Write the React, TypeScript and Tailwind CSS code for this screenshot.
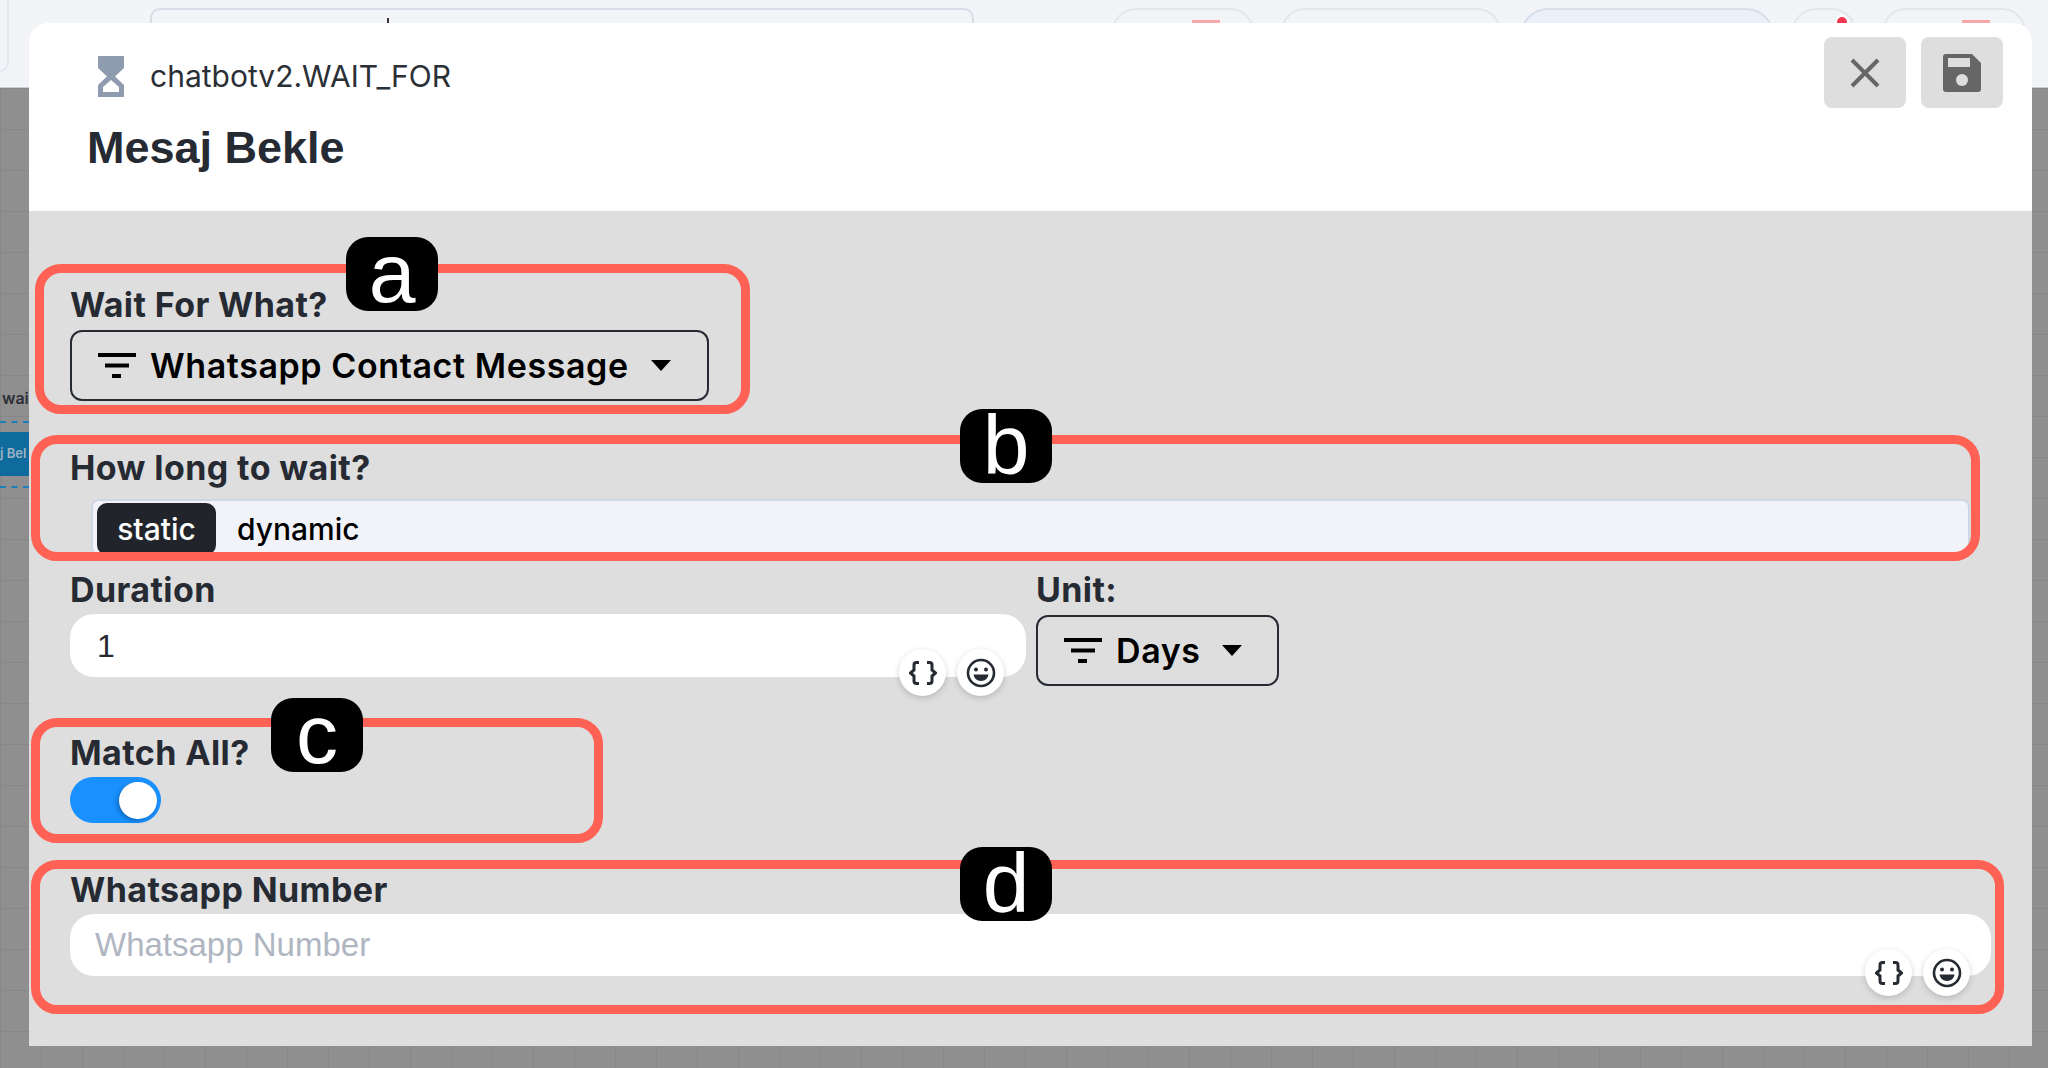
const sans = "[font-family:Inter,sans-serif]";
const helv = "[font-family:Liberation_Sans,sans-serif]";

function FilterIcon() {
  return (
    <svg width="38" height="26" viewBox="0 0 38 26" fill="#000">
      <rect x="0" y="0" width="38" height="4" />
      <rect x="7" y="10.5" width="24" height="4" />
      <rect x="14" y="21" width="9" height="4" />
    </svg>
  );
}

function Caret() {
  return (
    <svg width="20" height="11" viewBox="0 0 20 11" fill="#000">
      <path d="M0 0h20L10 11z" />
    </svg>
  );
}

function Select({ label, className }: { label: string; className: string }) {
  return (
    <div className={`flex items-center rounded-[12px] border-2 border-[#262a33] ${className}`}>
      <FilterIcon />
      <span className={`${sans} ml-[14px] text-[34px] font-semibold leading-none tracking-[0.6px] text-black`}>{label}</span>
      <span className="ml-auto flex">
        <Caret />
      </span>
    </div>
  );
}

function RoundButton({ children }: { children: React.ReactNode }) {
  return (
    <button className="flex h-[47px] w-[47px] items-center justify-center rounded-full bg-white shadow-[0_2px_6px_rgba(0,0,0,0.18)]">
      {children}
    </button>
  );
}

function InputTools({ className }: { className: string }) {
  return (
    <div className={`absolute flex gap-[11px] ${className}`}>
      <RoundButton>
        <svg width="28" height="24" viewBox="0 0 28 24" fill="none" stroke="#262a33" strokeWidth="3">
          <path d="M10 1.500H7.500Q5 1.500 5 4v5L1.500 12 5 15v5q0 2.500 2.500 2.500H10" />
          <path d="M18 1.500h2.500Q23 1.500 23 4v5l3.500 3L23 15v5q0 2.500-2.500 2.500H18" />
        </svg>
      </RoundButton>
      <RoundButton>
        <svg width="30" height="30" viewBox="0 0 30 30">
          <circle cx="15" cy="15" r="13" fill="none" stroke="#262a33" strokeWidth="2.600" />
          <circle cx="10" cy="11.500" r="2" fill="#262a33" />
          <circle cx="20" cy="11.500" r="2" fill="#262a33" />
          <path d="M7.500 16.500h15q-1 6.500-7.500 6.500t-7.500-6.500z" fill="#262a33" />
        </svg>
      </RoundButton>
    </div>
  );
}

function Label({ children }: { children: React.ReactNode }) {
  return (
    <div className={`${sans} flex h-[40px] items-center whitespace-nowrap text-[34px] font-bold leading-none tracking-[0.4px] text-[#262a33]`}>
      {children}
    </div>
  );
}

function Annotation({ letter, boxClass, badgeClass }: { letter: string; boxClass: string; badgeClass: string }) {
  return (
    <>
      <div className={`pointer-events-none absolute rounded-[26px] border-[9px] border-[#ff6154] ${boxClass}`} />
      <div
        className={`${helv} absolute flex h-[74px] w-[92px] items-center justify-center rounded-[22px] bg-black text-[84px] leading-none text-white ${badgeClass}`}
      >
        <span className="-mt-[3px]">{letter}</span>
      </div>
    </>
  );
}

function Backdrop() {
  return (
    <div className="absolute inset-0 flex flex-col">
      <div className="flex h-[88px] shrink-0 items-start border-b border-[#c8ced6] bg-[#f2f4f8] pt-[8px]">
        <div className="-mt-[8px] h-[72px] w-[9px] rounded-br-[12px] border-r-2 border-b-2 border-[#e3e6ec]" />
        <div className="ml-[141px] h-[60px] w-[824px] rounded-t-[10px] border-2 border-[#d8dde5]" />
        <div className="ml-[138px] h-[60px] w-[142px] rounded-t-[24px] border-2 border-[#e3e6ec]" />
        <div className="ml-[27px] h-[60px] w-[220px] rounded-t-[24px] border-2 border-[#e3e6ec]" />
        <div className="ml-[19px] h-[60px] w-[254px] rounded-t-[28px] border-2 border-[#d8dfe8] bg-[#e9f0f8]" />
        <div className="ml-[18px] h-[60px] w-[64px] rounded-t-[24px] border-2 border-[#e3e6ec]" />
        <div className="ml-[26px] h-[60px] w-[144px] rounded-t-[24px] border-2 border-[#e3e6ec]" />
      </div>
      <div className="relative flex-1 bg-[#8f8f8f] bg-[linear-gradient(#878787_1px,transparent_1px),linear-gradient(90deg,#878787_1px,transparent_1px)] bg-[size:41px_41px]">
        <span className={`${sans} absolute left-[2px] top-[298px] text-[16px] font-semibold leading-[24px] text-[#2d3036]`}>wai</span>
        <div className="absolute left-0 top-[333px] h-0 w-[29px] border-t-2 border-dashed border-[#1d7fb8]" />
        <div className={`${sans} absolute left-0 top-[344px] flex h-[44px] w-[29px] items-center overflow-hidden whitespace-nowrap bg-[#0f6a9e] text-[13px] font-semibold text-[#9fb4c2]`}>j Bel</div>
        <div className="absolute left-0 top-[398px] h-0 w-[29px] border-t-2 border-dashed border-[#1d7fb8]" />
      </div>
      <div className="absolute left-[387px] top-[18px] h-[6px] w-[2px] bg-[#333]" />
      <div className="absolute left-[1192px] top-[20px] h-[4px] w-[28px] bg-[#f7a9a9]" />
      <div className="absolute left-[1835px] top-[15px] h-[10px] w-[14px] rounded-t-full border-2 border-white bg-[#f5384f]" />
      <div className="absolute left-[1962px] top-[20px] h-[4px] w-[28px] bg-[#f7a9a9]" />
    </div>
  );
}

export default function App() {
  return (
    <div className="relative h-[1068px] w-[2048px] overflow-hidden">
      <Backdrop />

      <div className="absolute left-[29px] top-[23px] flex h-[1023px] w-[2003px] flex-col overflow-hidden rounded-t-[18px] bg-[#dedede]">
        <header className="relative h-[188px] shrink-0 bg-white">
          <div className="flex items-center pl-[69px] pt-[33px]">
            <svg width="26" height="41" viewBox="0 0 26 41" fill="#8f9bae">
              <path d="M0 0h26v12L17 20.500 26 29v12H0V29l9-8.500L0 12z" />
              <path d="M5 36h16v-5l-8-7-8 7z" fill="#fff" />
            </svg>
            <span className={`${sans} -mt-[2px] ml-[26px] text-[30px] leading-[40px] text-[#2b2f36]`}>chatbotv2.WAIT_FOR</span>
          </div>
          <h1 className={`${helv} ml-[58px] mt-[26px] text-[45px] font-bold leading-[50px] text-[#262a33]`}>Mesaj Bekle</h1>
          <div className="absolute right-[29px] top-[14px] flex gap-[15px]">
            <button className="flex h-[71px] w-[82px] items-center justify-center rounded-[8px] bg-[#dedede]">
              <svg width="30" height="30" viewBox="0 0 30 30" stroke="#666" strokeWidth="4">
                <path d="M2 2l26 26M28 2L2 28" />
              </svg>
            </button>
            <button className="flex h-[71px] w-[82px] items-center justify-center rounded-[8px] bg-[#dedede]">
              <svg width="38" height="38" viewBox="0 0 38 38">
                <path d="M3 0h26l9 9v26q0 3-3 3H3q-3 0-3-3V3q0-3 3-3z" fill="#666" />
                <rect x="5" y="4" width="22" height="9" fill="#dedede" />
                <circle cx="19" cy="26" r="6" fill="#dedede" />
              </svg>
            </button>
          </div>
        </header>

        <div className="flex flex-col px-[41px] pt-[74px]">
          <Label>Wait For What?</Label>
          <Select label="Whatsapp Contact Message" className="mt-[5px] h-[71px] w-[639px] pl-[26px] pr-[36px]" />

          <div className="mt-[47px]">
            <Label>How long to wait?</Label>
          </div>
          <div className="ml-[21px] mt-[11px] flex h-[57px] w-[1879px] items-start gap-[21px] rounded-[8px] border-2 border-[#cfd8e2] bg-[#f1f3f8] pl-[4px] pt-[2px]">
            <span className={`${sans} flex h-[52px] w-[119px] items-center justify-center rounded-[10px] bg-[#21252b] text-[30px] font-medium text-white`}>static</span>
            <span className={`${sans} flex h-[52px] items-center text-[30px] font-medium text-black`}>dynamic</span>
          </div>

          <div className="mt-[14px] flex items-start gap-[10px]">
            <div className="relative w-[956px]">
              <Label>Duration</Label>
              <div className={`${helv} mt-[4px] flex h-[63px] items-center rounded-[24px] bg-white pl-[27px] text-[32px] text-[#262a33]`}>1</div>
              <InputTools className="left-[829px] top-[79px]" />
            </div>
            <div>
              <Label>Unit:</Label>
              <Select label="Days" className="mt-[5px] h-[71px] w-[243px] pl-[26px] pr-[35px]" />
            </div>
          </div>

          <div className="mt-[47px]">
            <Label>Match All?</Label>
          </div>
          <div className="relative mt-[4px] h-[46px] w-[91px] rounded-full bg-[#1890ff]">
            <div className="absolute right-[4px] top-[5px] h-[37px] w-[38px] rounded-full bg-white shadow-[-2px_2px_4px_rgba(0,0,0,0.25)]" />
          </div>

          <div className="relative mt-[47px] w-[1921px]">
            <Label>Whatsapp Number</Label>
            <div className={`${helv} mt-[4px] flex h-[62px] items-center rounded-[24px] bg-white pl-[25px] text-[33px] text-[#b0b6c1]`}>Whatsapp Number</div>
            <InputTools className="left-[1795px] top-[79px]" />
          </div>
        </div>
      </div>

      <Annotation letter="a" boxClass="left-[35px] top-[264px] h-[150px] w-[715px]" badgeClass="left-[346px] top-[237px]" />
      <Annotation letter="b" boxClass="left-[31px] top-[435px] h-[126px] w-[1949px]" badgeClass="left-[960px] top-[409px]" />
      <Annotation letter="c" boxClass="left-[31px] top-[718px] h-[125px] w-[572px]" badgeClass="left-[271px] top-[698px]" />
      <Annotation letter="d" boxClass="left-[31px] top-[860px] h-[154px] w-[1973px]" badgeClass="left-[960px] top-[847px]" />
    </div>
  );
}
